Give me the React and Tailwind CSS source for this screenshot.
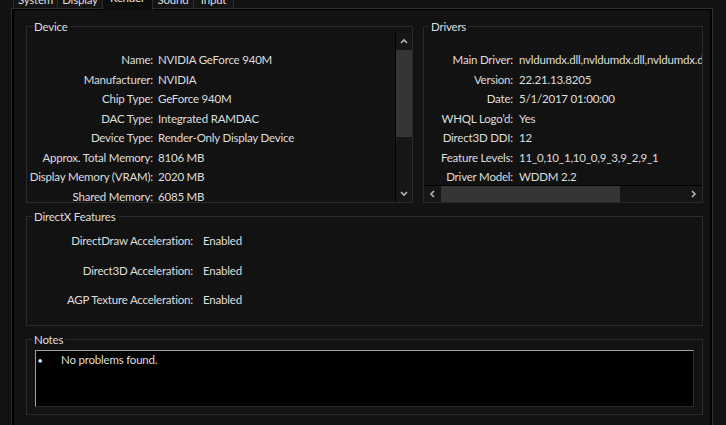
import React from 'react'

const deviceRows = [
  ['Name:', 'NVIDIA GeForce 940M'],
  ['Manufacturer:', 'NVIDIA'],
  ['Chip Type:', 'GeForce 940M'],
  ['DAC Type:', 'Integrated RAMDAC'],
  ['Device Type:', 'Render-Only Display Device'],
  ['Approx. Total Memory:', '8106 MB'],
  ['Display Memory (VRAM):', '2020 MB'],
  ['Shared Memory:', '6085 MB'],
]

const driverRows = [
  ['Main Driver:', 'nvldumdx.dll,nvldumdx.dll,nvldumdx.dll,nvldumdx.dll'],
  ['Version:', '22.21.13.8205'],
  ['Date:', '5/1/2017 01:00:00'],
  ['WHQL Logo’d:', 'Yes'],
  ['Direct3D DDI:', '12'],
  ['Feature Levels:', '11_0,10_1,10_0,9_3,9_2,9_1'],
  ['Driver Model:', 'WDDM 2.2'],
]

const featureRows = [
  ['DirectDraw Acceleration:', 'Enabled'],
  ['Direct3D Acceleration:', 'Enabled'],
  ['AGP Texture Acceleration:', 'Enabled'],
]

const tabs = [
  ['System', 'w-[45px]'],
  ['Display', 'w-[45px]'],
  ['Render', 'w-[50px]'],
  ['Sound', 'w-[41px]'],
  ['Input', 'w-[40px]'],
]

const Chevron = ({ dir }) => {
  const pts = {
    up: '1,5 4,2 7,5',
    down: '1,2 4,5 7,2',
    left: '5,1 2,4 5,7',
    right: '2,1 5,4 2,7',
  }[dir]
  return (
    <svg width="8" height="8" viewBox="0 0 8 8" className="block">
      <polyline points={pts} fill="none" stroke="#b4b4b4" strokeWidth="1.6" />
    </svg>
  )
}

const Group = ({ title, className, children }) => (
  <div className={`relative border border-[#2b2b2b] ${className}`}>
    <span className="absolute left-[5px] top-[-8px] bg-[#121212] px-[2px] leading-[16px]">
      {title}
    </span>
    {children}
  </div>
)

export default function App() {
  return (
    <div className="h-[425px] w-[726px] overflow-hidden bg-[#121212] font-['Segoe_UI',Lato,sans-serif] text-[11.5px] tracking-[-0.2px] text-[#dedede]">
      <div className="relative z-10 -mt-[11px] ml-[13px] flex h-[19px]">
        {tabs.map(([label, w]) => {
          const selected = label === 'Render'
          return (
            <div
              key={label}
              className={`${w} border-r border-[#2e2e2e] text-center leading-[16px] ${
                selected
                  ? 'h-[21px] bg-[#0d0d0d] pt-[1px] text-[#e6e6e6]'
                  : 'h-[19px] bg-[#141414] pt-[3px] first:border-l'
              }`}
            >
              {label}
            </div>
          )
        })}
      </div>

      <div className="ml-[11px] h-[430px] w-[702px] border-l border-r border-t border-[#2e2e2e]">
        <div className="h-full border-l-2 border-r-2 border-t border-black bg-[#121212] pl-[12px] pt-[16px]">
          <div className="flex gap-[10px]">
            <Group title="Device" className="h-[177px] w-[387px]">
              <div className="flex h-full pt-[6px]">
                <div className="flex-1 overflow-hidden whitespace-nowrap pt-[17px]">
                  {deviceRows.map(([k, v]) => (
                    <div key={k} className="flex h-[19.5px] items-center">
                      <span className="w-[126px] shrink-0 text-right">{k}</span>
                      <span className="ml-[5px]">{v}</span>
                    </div>
                  ))}
                </div>
                <div className="flex w-[17px] flex-col border-l border-black bg-[#161616]">
                  <div className="flex h-[17px] items-center justify-center">
                    <Chevron dir="up" />
                  </div>
                  <div className="h-[87px] bg-[#353535]" />
                  <div className="flex-1" />
                  <div className="flex h-[17px] items-center justify-center">
                    <Chevron dir="down" />
                  </div>
                </div>
              </div>
            </Group>

            <Group title="Drivers" className="h-[177px] w-[280px]">
              <div className="flex h-full flex-col">
                <div className="flex-1 overflow-hidden whitespace-nowrap pt-[23px]">
                  {driverRows.map(([k, v]) => (
                    <div key={k} className="flex h-[19.5px] items-center">
                      <span className="w-[89px] shrink-0 text-right">{k}</span>
                      <span className="ml-[6px]">{v}</span>
                    </div>
                  ))}
                </div>
                <div className="flex h-[17px] border-t border-black bg-[#161616]">
                  <div className="flex w-[17px] items-center justify-center">
                    <Chevron dir="left" />
                  </div>
                  <div className="w-[179px] bg-[#353535]" />
                  <div className="flex-1" />
                  <div className="flex w-[17px] items-center justify-center">
                    <Chevron dir="right" />
                  </div>
                </div>
              </div>
            </Group>
          </div>

          <Group title="DirectX Features" className="mt-[13px] h-[110px] w-[677px]">
            <div className="flex flex-col gap-[9.5px] pt-[14px]">
              {featureRows.map(([k, v]) => (
                <div key={k} className="flex h-[20px] items-center">
                  <span className="w-[166px] shrink-0 text-right">{k}</span>
                  <span className="ml-[10px]">{v}</span>
                </div>
              ))}
            </div>
          </Group>

          <Group title="Notes" className="mt-[13px] h-[76px] w-[677px]">
            <div className="ml-[8px] mt-[10px] h-[57px] w-[659px] border-b border-l border-r border-t border-b-[#2a2a2a] border-l-[#a0a0a0] border-r-[#2a2a2a] border-t-[#a0a0a0] bg-black">
              <div className="flex h-[18px] items-center">
                <span className="ml-[2px] w-[23px] text-[7px] text-white">●</span>
                <span>No problems found.</span>
              </div>
            </div>
          </Group>
        </div>
      </div>
    </div>
  )
}
